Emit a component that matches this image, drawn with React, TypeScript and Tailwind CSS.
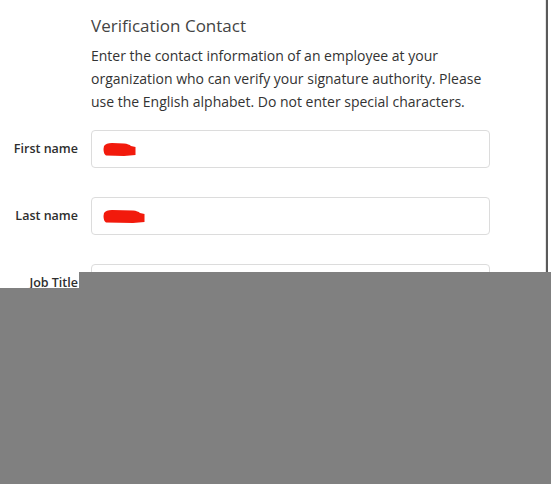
import type { ReactNode } from "react";

const font = { fontFamily: '"Open Sans", "Noto Sans", sans-serif' };

/** Red marker scribble that hides the entered value. */
function Redaction({ width }: { width: number }) {
  return (
    <svg width={width} height="15" viewBox={`0 0 ${width} 15`} className="shrink-0">
      <path
        d={`M1 4 Q3 1 9 1 L${width - 12} 1.5 Q${width - 7} 2 ${width - 5} 4 L${width - 0.5} 5 L${width - 0.5} 13 L${width - 12} 14 L3 13.5 Q0.5 12 0.5 7 Z`}
        fill="#f21a0c"
      />
    </svg>
  );
}

function Field({
  label,
  children,
}: {
  label: string;
  children?: ReactNode;
}) {
  return (
    <div className="flex items-center">
      <label className="w-[78px] shrink-0 text-right text-[12.5px] font-semibold text-[#2e2e2e]">
        {label}
      </label>
      <div className="ml-[13px] flex h-[38px] w-[399px] items-center rounded-[4px] border border-[#dcdcdc] bg-white px-[11px]">
        {children}
      </div>
    </div>
  );
}

export default function App() {
  return (
    <div className="relative flex h-[484px] w-[551px] overflow-hidden bg-white" style={font}>
      <div className="flex w-[545px] flex-col">
        <div className="ml-[91px] w-[400px] pt-[14px]">
          <h2 className="text-[17px] leading-[24px] text-[#444]">Verification Contact</h2>
          <p className="mt-[6px] text-[14px] leading-[23px] text-[#333]">
            Enter the contact information of an employee at your organization who can verify your
            signature authority. Please use the English alphabet. Do not enter special characters.
          </p>
        </div>
        <div className="mt-[17px] flex flex-col gap-[29px]">
          <Field label="First name">
            <Redaction width={33} />
          </Field>
          <Field label="Last name">
            <Redaction width={42} />
          </Field>
          <Field label="Job Title" />
        </div>
      </div>
      <div className="w-px bg-[#e6e6e6]" />
      <div className="w-[2px] bg-[#5a5a5a]" />

      {/* grey sheet lying over the lower part of the form */}
      <div className="absolute inset-x-0 bottom-0 top-[288px] bg-[#808080]" />
      <div className="absolute left-[79px] right-0 top-[272px] h-[16px] bg-[#808080]" />
    </div>
  );
}
